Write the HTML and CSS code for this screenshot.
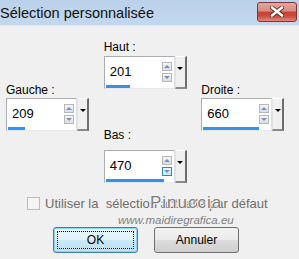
FILE: index.html
```html
<!DOCTYPE html>
<html>
<head>
<title>Sélection personnalisée</title>
<link rel="stylesheet" href="styles.css">
</head>
<body>
<div class="window">
<div class="titlebar">
<span class="title">Sélection personnalisée</span>
<div class="close">
<svg width="14" height="11" viewBox="0 0 14 11"><path d="M2 1.5 L12 9.5 M12 1.5 L2 9.5" stroke="#5a2420" stroke-width="4.2" stroke-linecap="round"/><path d="M2 1.5 L12 9.5 M12 1.5 L2 9.5" stroke="#ffffff" stroke-width="2.6" stroke-linecap="round"/></svg>
</div>
</div>

<div class="fields">
<div class="col side">
<div class="lbl">Gauche :</div>
<div class="spin">
<div class="field">
<div class="row"><span class="num">209</span><div class="arrows"><div class="arr up"></div><div class="arr down"></div></div></div>
<div class="bar" style="width:17px"></div>
</div>
<div class="drop"><span class="tri"></span></div>
</div>
</div>

<div class="col mid">
<div class="lbl">Haut :</div>
<div class="spin">
<div class="field">
<div class="row"><span class="num">201</span><div class="arrows"><div class="arr up"></div><div class="arr down"></div></div></div>
<div class="bar" style="width:24px"></div>
</div>
<div class="drop"><span class="tri"></span></div>
</div>
<div class="lbl lbl-bas">Bas :</div>
<div class="spin spin-bas">
<div class="field">
<div class="row"><span class="num">470</span><div class="arrows"><div class="arr up"></div><div class="arr down hot"></div></div></div>
<div class="bar" style="width:58px"></div>
</div>
<div class="drop"><span class="tri"></span></div>
</div>
</div>

<div class="col side">
<div class="lbl">Droite :</div>
<div class="spin">
<div class="field">
<div class="row"><span class="num">660</span><div class="arrows"><div class="arr up"></div><div class="arr down"></div></div></div>
<div class="bar" style="width:56px"></div>
</div>
<div class="drop"><span class="tri"></span></div>
</div>
</div>
</div>

<div class="check-row">
<span class="box"></span>
<span class="check-text">Utiliser la &nbsp;sélection actuelle par défaut</span>
</div>

<div class="buttons">
<div class="btn ok"><span class="focus">OK</span></div>
<div class="btn">Annuler</div>
</div>

<div class="mark">Pinuccia</div>
<div class="mark-url">www.maidiregrafica.eu</div>
</div>
</body>
</html>
```

FILE: styles.css
```css
body {
margin: 0;
font-family: "Liberation Sans", Arial, sans-serif;
background-color: #f0f0f0;
}

.window {
width: 299px;
height: 259px;
position: relative;
overflow: hidden;
background-color: #f0f0f0;
}

.titlebar {
height: 25px;
border-bottom: 1px solid #dde8f4;
background: linear-gradient(#bad1ea, #c3d8ee);
display: flex;
align-items: center;
justify-content: space-between;
}

.title {
font-size: 14.5px;
line-height: 26px;
color: #111;
}

.close {
width: 38px;
height: 18px;
margin-right: 2px;
margin-top: -2px;
border: 1px solid #7e3630;
border-radius: 3px;
background: linear-gradient(#e5a79d, #d98a80 45%, #c54434 50%, #c9483a 70%, #dc8a80);
display: flex;
align-items: center;
justify-content: center;
}

.fields {
display: flex;
padding: 14px 0 0 6px;
}

.col {
width: 98px;
display: flex;
flex-direction: column;
}

.side {
padding-top: 43px;
}

.lbl {
font-size: 12px;
line-height: 14px;
color: #000;
margin-bottom: 2px;
}

.side .lbl {
margin-bottom: 1px;
}

.lbl-bas {
margin-top: 39px;
margin-bottom: 8px;
}

.spin {
display: flex;
width: 83px;
height: 33px;
}

.field {
width: 71px;
height: 33px;
box-sizing: border-box;
border: 1px solid #abadb3;
border-bottom-color: #e3e9ef;
border-right-color: #dbdfe6;
background-color: #fff;
padding: 5px 1px 0 1px;
display: flex;
flex-direction: column;
}

.row {
height: 20px;
display: flex;
justify-content: space-between;
}

.num {
font-size: 13px;
line-height: 20px;
padding-left: 4px;
color: #000;
}

.arrows {
width: 10px;
margin-right: 1px;
display: flex;
flex-direction: column;
justify-content: space-between;
}

.arr {
height: 9px;
box-sizing: border-box;
border: 1px solid #b7b7b7;
background: linear-gradient(#f6f6f6, #dedede);
display: flex;
align-items: center;
justify-content: center;
}

.arr.hot {
border-color: #3c7fb1;
background: linear-gradient(#eaf6fd, #c4e5f6);
}

.arr::after {
content: "";
border-left: 3px solid transparent;
border-right: 3px solid transparent;
}

.up::after {
border-bottom: 3px solid #6f8fcf;
}

.down::after {
border-top: 3px solid #6f8fcf;
}

.bar {
height: 3px;
margin-top: 3px;
background-color: #3a8fe8;
}

.drop {
width: 12px;
height: 33px;
box-sizing: border-box;
border-top: 1px solid #fff;
border-left: 1px solid #e3e3e3;
border-right: 2px solid #6d6d6d;
border-bottom: 2px solid #8a8a8a;
background-color: #f0f0f0;
display: flex;
justify-content: center;
padding-top: 10px;
}

.tri {
width: 0;
height: 0;
border-left: 3px solid transparent;
border-right: 3px solid transparent;
border-top: 3px solid #000;
}

.check-row {
display: flex;
align-items: center;
height: 15px;
margin-top: 13px;
padding-left: 27px;
}

.box {
width: 13px;
height: 13px;
box-sizing: border-box;
border: 1px solid #bcbcbc;
background-color: #f4f4f4;
}

.check-text {
font-size: 13px;
line-height: 15px;
color: #6d6d6d;
margin-left: 5px;
white-space: nowrap;
}

.buttons {
display: flex;
gap: 16px;
margin-top: 16px;
padding-left: 53px;
}

.btn {
width: 85px;
height: 26px;
box-sizing: border-box;
border: 1px solid #707070;
border-radius: 3px;
background: linear-gradient(#f2f2f2, #ebebeb 50%, #dddddd 50%, #cfcfcf);
font-size: 12px;
color: #000;
display: flex;
align-items: center;
justify-content: center;
}

.btn.ok {
border-color: #3c7fb1;
background: linear-gradient(#eaf6fd, #dff1fb 50%, #cbe8f7 50%, #bcdff1);
box-shadow: inset 0 0 0 1px #8fd3f5;
padding: 3px;
}

.focus {
flex: 1;
align-self: stretch;
border: 1px dotted #000;
display: flex;
align-items: center;
justify-content: center;
}

/* watermark over the dialog */
.mark {
position: absolute;
left: 150px;
top: 193px;
font-size: 17px;
line-height: 20px;
letter-spacing: 1px;
color: #7d7d7d;
text-shadow: 0 0 1px #fff, 1px 1px 0 #f4f4f4, -1px -1px 0 #f4f4f4;
}

.mark-url {
position: absolute;
left: 118px;
top: 214px;
font-size: 11.5px;
line-height: 13px;
font-style: italic;
color: #7f7f7f;
}
```
